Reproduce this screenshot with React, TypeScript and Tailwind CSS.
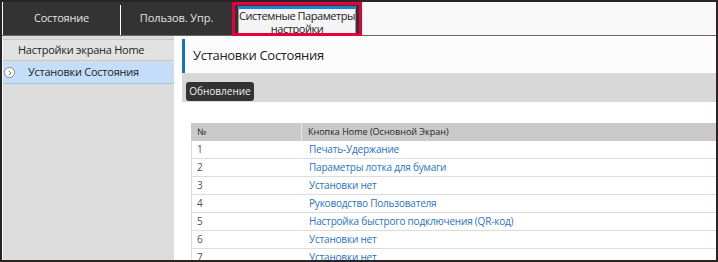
import { ChevronRight } from 'lucide-react';

const rows = [
  { n: '1', label: 'Печать-Удержание' },
  { n: '2', label: 'Параметры лотка для бумаги' },
  { n: '3', label: 'Установки нет' },
  { n: '4', label: 'Руководство Пользователя' },
  { n: '5', label: 'Настройка быстрого подключения (QR-код)' },
  { n: '6', label: 'Установки нет' },
  { n: '7', label: 'Установки нет' },
];

export default function App() {
  return (
    <div className="w-[718px] h-[262px] overflow-hidden bg-white border-2 border-[#2b2424] font-['Open_Sans',sans-serif] flex flex-col">
      {/* tabs */}
      <div className="flex h-[34px] shrink-0 pl-px bg-[#f8f8f8] border-b border-[#666]">
        <div className="w-[117px] bg-[#333] text-[#e4e4e4] text-[11px] tracking-[-0.2px] flex items-center justify-center">
          Состояние
        </div>
        <div className="w-px bg-[#333] flex flex-col">
          <div className="h-[3px]" />
          <div className="flex-1 bg-white" />
        </div>
        <div className="w-[111px] bg-[#333] text-[#e4e4e4] text-[11px] tracking-[-0.1px] flex items-center justify-center">
          Пользов. Упр.
        </div>
        <div className="w-[130px] -mb-px border-[3px] border-[#e4003b] bg-[#333] pt-px px-[3px] flex">
          <div className="flex-1 bg-[#f4f4f4] border-t-[3px] border-[#1e80d2] border-x border-x-[#999] text-[#222] text-[11px] tracking-[-0.45px] leading-[13px] text-center whitespace-nowrap overflow-hidden">
            <div>Системные Параметры</div>
            <div>настройки</div>
          </div>
        </div>
        <div className="flex-1" />
      </div>

      <div className="flex flex-1 min-h-0 overflow-hidden">
        {/* sidebar */}
        <div className="w-[171px] shrink-0 ml-px bg-[#dcdcdc] pt-[3px] flex flex-col">
          <div className="h-[22px] shrink-0 bg-[#e2e2e2] border-y border-[#c6c6c6] text-[11px] tracking-[-0.25px] text-[#222] pl-[15px] flex items-center">
            Настройки экрана Home
          </div>
          <div className="h-[22px] shrink-0 mt-px bg-[#c4defa] border-b border-[#a9c3de] text-[11px] tracking-[-0.25px] text-[#222] flex items-center">
            <div className="w-[11px] h-[11px] ml-px rounded-full bg-white border border-[#888] flex items-center justify-center">
              <ChevronRight size={8} strokeWidth={3} className="text-[#777]" />
            </div>
            <span className="ml-[13px]">Установки Состояния</span>
          </div>
        </div>

        {/* main */}
        <div className="flex-1 ml-[8px] pt-[3px] flex flex-col overflow-hidden">
          <div className="h-[34px] shrink-0 bg-[#fcfcfc] border-l-[3px] border-[#1a6fc0] pl-[8px] flex items-center text-[13px] tracking-[-0.3px] text-[#222]">
            Установки Состояния
          </div>
          <div className="h-[29px] shrink-0 bg-[#d8d8d8] pl-[4px] pt-[4px]">
            <button className="h-[19px] w-[68px] rounded-[3px] bg-[#333] text-[#eee] text-[10px] leading-[19px] text-center">
              Обновление
            </button>
          </div>

          <div className="shrink-0 mt-[21px] ml-[9px]">
            <div className="h-[18px] bg-[#cacaca] flex items-center text-[#222] text-[9px]">
              <div className="w-[111px] pl-[6px] border-r border-[#e4e4e4] h-full flex items-center">№</div>
              <div className="pl-[6px]">Кнопка Home (Основной Экран)</div>
            </div>
            {rows.map((r) => (
              <div key={r.label + r.n} className="h-[18px] border-b border-l border-[#dcdcdc] flex items-center text-[10px] tracking-[-0.2px]">
                <div className="w-[111px] pl-[5px] text-[#5a4e4e]">{r.n}</div>
                <div className="pl-[6px] text-[#2a72c8]">{r.label}</div>
              </div>
            ))}
          </div>
        </div>
      </div>
    </div>
  );
}
